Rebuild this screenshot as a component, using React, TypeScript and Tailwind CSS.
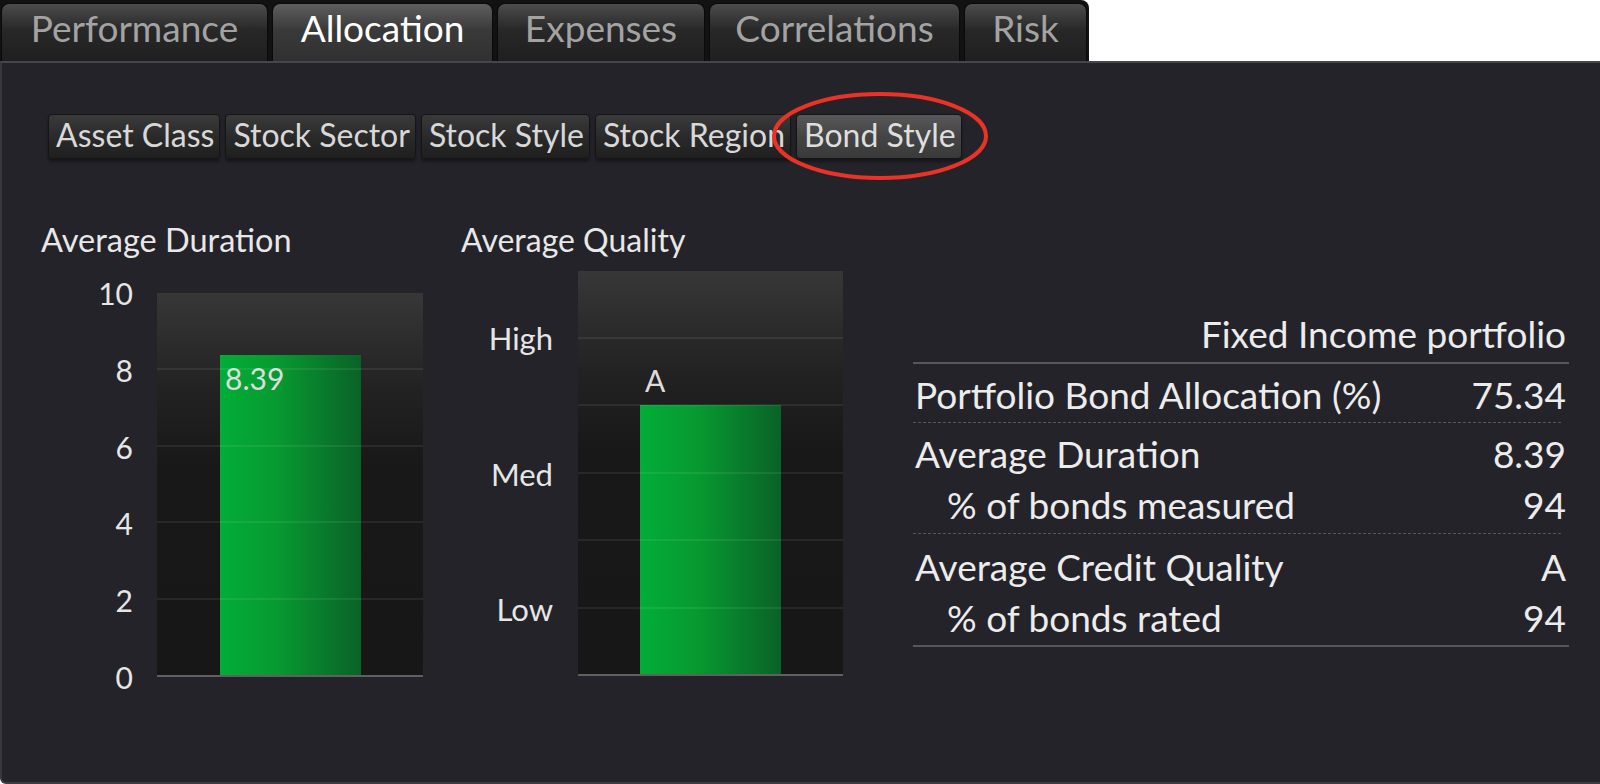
import React from "react";

type Tab = { label: string; width: string; active?: boolean };

const tabs: Tab[] = [
  { label: "Performance", width: "w-[267px]" },
  { label: "Allocation", width: "w-[221px]", active: true },
  { label: "Expenses", width: "w-[208px]" },
  { label: "Correlations", width: "w-[251px]" },
  { label: "Risk", width: "w-[123px]" },
];

const subTabs = ["Asset Class", "Stock Sector", "Stock Style", "Stock Region", "Bond Style"];

const plotBg =
  "bg-[linear-gradient(to_bottom,#373737_0%,#222222_25%,#181818_45%,#171717_100%)]";
const barBg = "bg-[linear-gradient(to_right,#02ad37_0%,#079a31_40%,#0a6227_100%)]";

function DurationChart() {
  const max = 10;
  const value = 8.39;
  const ticks = [10, 8, 6, 4, 2, 0];
  return (
    <div className="flex flex-col">
      <div className="text-[32.5px] leading-[40px] text-[#e8e8e8]">Average Duration</div>
      <div className="mt-[33px] flex">
        <div className="relative w-[92px] h-[384px]">
          {ticks.map((t) => (
            <span
              key={t}
              className="absolute right-0 -translate-y-1/2 text-[30px] leading-none text-[#e6e6e6]"
              style={{ top: `${(1 - t / max) * 100}%` }}
            >
              {t}
            </span>
          ))}
        </div>
        <div className={`ml-[24px] relative w-[266px] h-[384px] border-b-2 border-[#606060] ${plotBg}`}>
          <div
            className={`absolute bottom-0 left-[63px] w-[141px] ${barBg}`}
            style={{ height: `${(value / max) * 382}px` }}
          >
            <span className="absolute top-[8px] left-[5px] text-[30px] leading-none text-[#dcdcdc]">
              {value}
            </span>
          </div>
          {/* grid lines every 2 units */}
          <div className="absolute inset-0 flex flex-col">
            {[0, 1, 2, 3, 4].map((i) => (
              <div key={i} className={`flex-1 ${i > 0 ? "border-t-2 border-white/[0.07]" : ""}`} />
            ))}
          </div>
        </div>
      </div>
    </div>
  );
}

function QualityChart() {
  const bands = 6;
  const level = 4;
  const labels = [
    { text: "High", at: 1 },
    { text: "Med", at: 3 },
    { text: "Low", at: 5 },
  ];
  return (
    <div className="flex flex-col">
      <div className="text-[32px] leading-[40px] text-[#e8e8e8]">Average Quality</div>
      <div className="mt-[11px] flex">
        <div className="relative w-[92px] h-[405px]">
          {labels.map((l) => (
            <span
              key={l.text}
              className="absolute right-0 -translate-y-1/2 text-[31px] leading-none text-[#e6e6e6]"
              style={{ top: `${(l.at / bands) * 100}%` }}
            >
              {l.text}
            </span>
          ))}
        </div>
        <div className={`ml-[25px] relative w-[265px] h-[405px] border-b-2 border-[#606060] ${plotBg}`}>
          <div
            className={`absolute bottom-0 left-[62px] w-[141px] ${barBg}`}
            style={{ height: `${(level / bands) * 403}px` }}
          >
            <span className="absolute bottom-full mb-[10px] left-[5px] text-[30px] leading-none text-[#dcdcdc]">
              A
            </span>
          </div>
          <div className="absolute inset-0 flex flex-col">
            {[0, 1, 2, 3, 4, 5].map((i) => (
              <div key={i} className={`flex-1 ${i > 0 ? "border-t-2 border-white/[0.07]" : ""}`} />
            ))}
          </div>
        </div>
      </div>
    </div>
  );
}

function Row({ label, value, indent }: { label: string; value: string; indent?: boolean }) {
  return (
    <div className="h-[51px] flex items-center justify-between pr-[3px]">
      <span className={indent ? "pl-[34px]" : "pl-[2px]"}>{label}</span>
      <span>{value}</span>
    </div>
  );
}

function SummaryTable() {
  return (
    <div className="w-[656px] mt-[88px] text-[37px] leading-none text-[#ececec]">
      <div className="h-[51px] flex items-center justify-end pr-[3px]">Fixed Income portfolio</div>
      <div className="mt-[3px] h-[2px] bg-[#56565b]" />
      <div className="mt-[5px]">
        <Row label="Portfolio Bond Allocation (%)" value="75.34" />
      </div>
      <div className="mt-[2px] mr-[8px] border-t border-dashed border-[#55555a]" />
      <div className="mt-[5px]">
        <Row label="Average Duration" value="8.39" />
        <Row label="% of bonds measured" value="94" indent />
      </div>
      <div className="mt-[3px] mr-[8px] border-t border-dashed border-[#55555a]" />
      <div className="mt-[7px]">
        <Row label="Average Credit Quality" value="A" />
        <Row label="% of bonds rated" value="94" indent />
      </div>
      <div className="mt-[2px] h-[2px] bg-[#56565b]" />
    </div>
  );
}

export default function App() {
  return (
    <div className="relative w-[1600px] h-[784px] overflow-hidden bg-white font-['Lato','Noto_Sans',sans-serif]">
      {/* tab strip */}
      <div className="flex h-[61px]">
        <div className="flex items-end gap-[4px] bg-[#121212] pl-[1px] pr-[2px] rounded-tr-[8px]">
          {tabs.map((t) => (
            <div
              key={t.label}
              className={`${t.width} h-[58px] flex items-center justify-center pb-[11px] rounded-t-[8px] border border-b-0 border-[#0a0a0a] text-[37px] leading-none ${
                t.active
                  ? "bg-[linear-gradient(to_bottom,#5e5e5e_0%,#3a3a3a_45%,#303030_100%)] text-white"
                  : "bg-[linear-gradient(to_bottom,#4c4c4c_0%,#282828_45%,#1f1f1f_100%)] text-[#a3a3a3]"
              }`}
            >
              {t.label}
            </div>
          ))}
        </div>
        <div className="flex-1 bg-white" />
      </div>

      {/* panel */}
      <div className="h-[723px] bg-[#232329] border-t-2 border-t-[#45454a] border-l-2 border-l-[#38383c] border-b-2 border-b-[#3c3c40] rounded-bl-[6px]">
        <div className="mt-[51px] pl-[46px] flex gap-[5px]">
          {subTabs.map((s) => (
            <div
              key={s}
              className={`h-[45px] pl-[7px] pr-[5px] flex items-center pb-[3px] rounded-[4px] border border-[#151515] text-[32px] leading-none shadow-[0_3px_3px_rgba(0,0,0,0.35)] ${
                s === "Bond Style"
                  ? "bg-[linear-gradient(to_bottom,#585858_0%,#444444_50%,#3a3a3a_100%)] text-[#dedede]"
                  : "bg-[linear-gradient(to_bottom,#3a3a3a_0%,#2a2a2a_50%,#1f1f1f_100%)] text-[#d8d8d8]"
              }`}
            >
              {s}
            </div>
          ))}
        </div>

        <div className="mt-[61px] pl-[39px] flex items-start">
          <DurationChart />
          <div className="ml-[38px]">
            <QualityChart />
          </div>
          <div className="ml-[70px]">
            <SummaryTable />
          </div>
        </div>
      </div>

      {/* highlight ring around the bond style button */}
      <svg className="absolute left-[770px] top-[90px]" width="220" height="94" viewBox="0 0 220 94">
        <ellipse cx="110" cy="46" rx="106" ry="42" fill="none" stroke="#ea3326" strokeWidth="4" />
      </svg>
    </div>
  );
}
